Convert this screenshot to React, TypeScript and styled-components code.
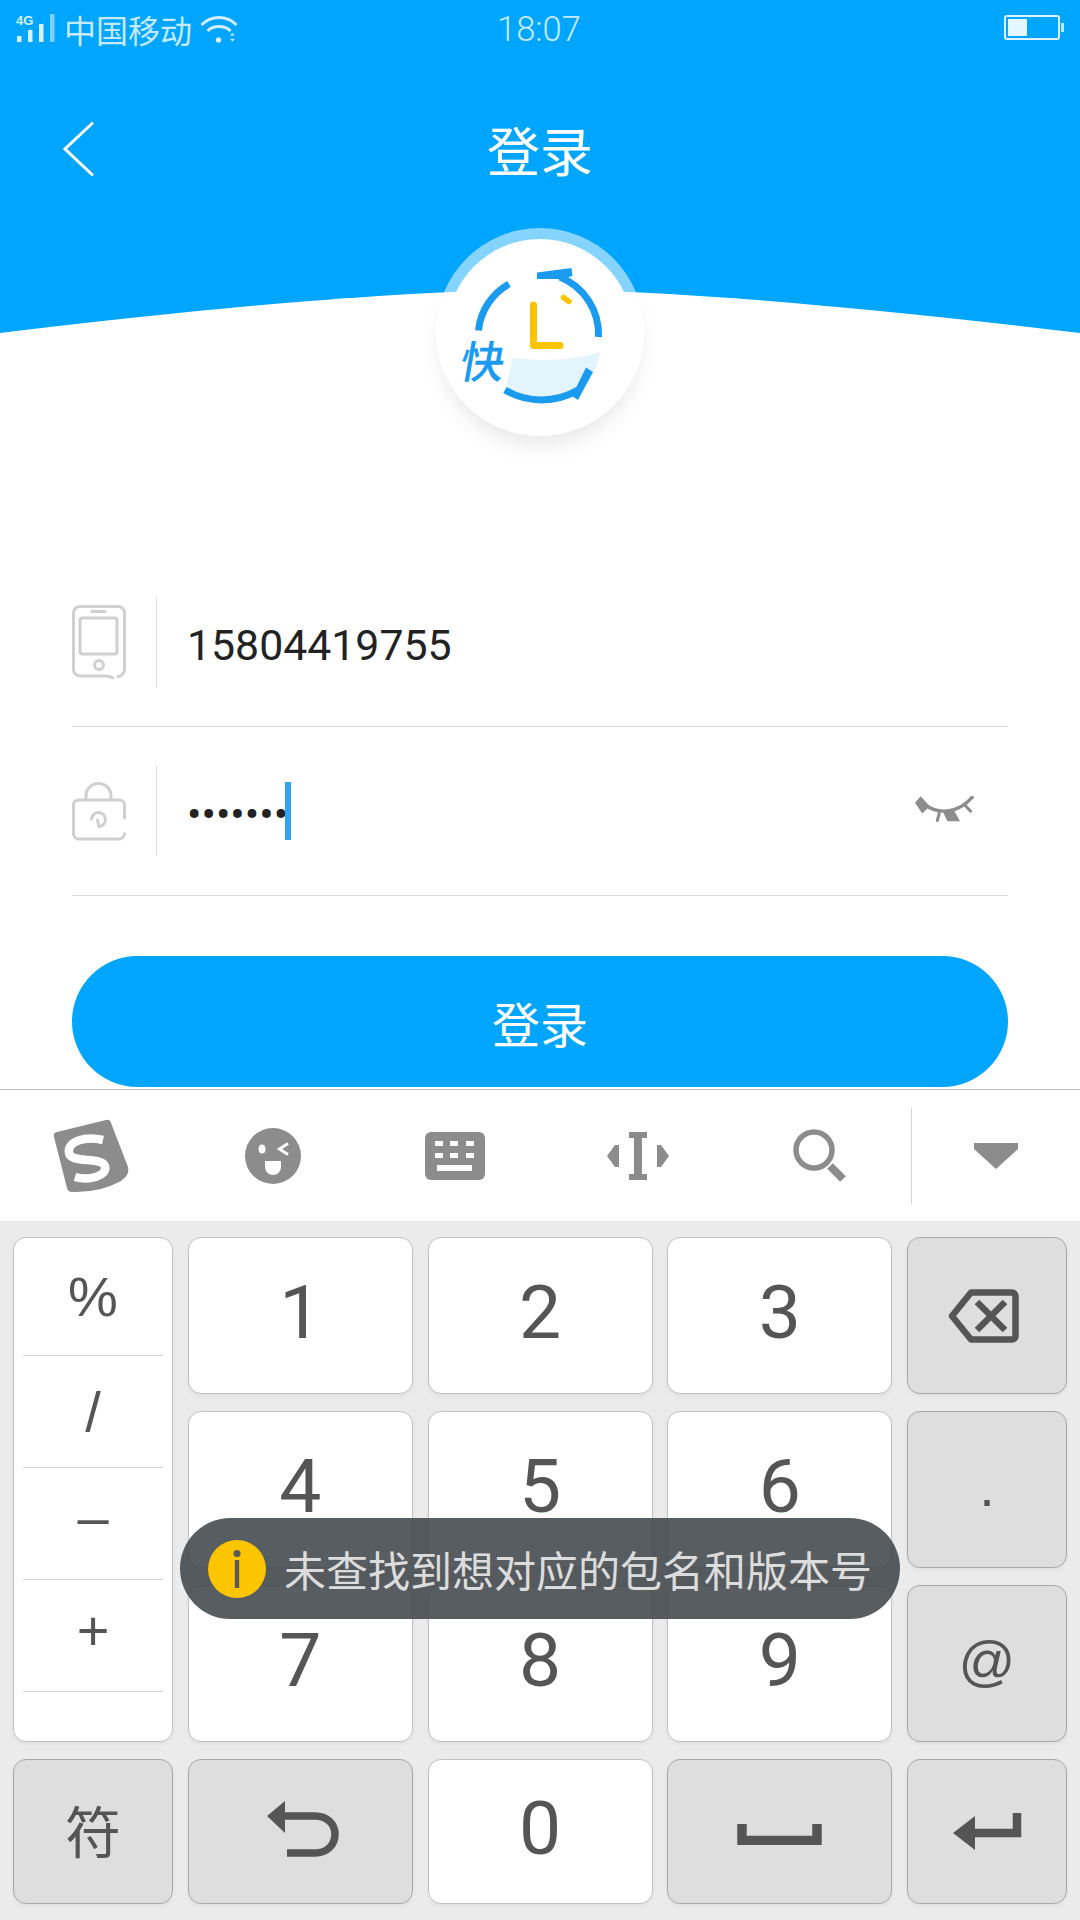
import React from "react";
import styled, { createGlobalStyle } from "styled-components";

const Global = createGlobalStyle`
  html, body { margin: 0; padding: 0; background: #fff; }
  * { box-sizing: border-box; }
`;

const BLUE = "#00a5fe";
const CJK = `"Noto Sans CJK SC", "Liberation Sans", sans-serif`;
const ICON = "#8c8c8c";
const KEYINK = "#555555";

const Page = styled.div`
  position: relative;
  width: 1080px;
  height: 1920px;
  display: flex;
  flex-direction: column;
  overflow: hidden;
  background: #fff;
`;

const Hero = styled.header`
  position: relative;
  height: 333px;
  flex: none;
  display: flex;
  flex-direction: column;
  background: ${BLUE};
  color: #fff;
`;

const StatusBar = styled.div`
  height: 58px;
  display: grid;
  grid-template-columns: 1fr auto 1fr;
  align-items: center;
  padding: 0 18px 0 16px;
`;

const StatusLeft = styled.div`
  display: flex;
  align-items: center;
`;

const Carrier = styled.span`
  font: 400 32px/1 ${CJK};
  color: #c4eaff;
  margin-left: 8px;
`;

const Clock = styled.span`
  font: 300 34.500px/1 Roboto, sans-serif;
  color: #c4eaff;
`;

const Battery = styled.div`
  position: relative;
  justify-self: end;
  width: 56px;
  height: 25px;
  margin: 0 2px 3px 0;
  border: 2px solid #dff3ff;
  border-radius: 3px;
  padding: 2px;
  &::after {
    content: "";
    position: absolute;
    right: -6px;
    top: 6px;
    width: 3px;
    height: 9px;
    background: #bfe8ff;
  }
`;

const BatteryLevel = styled.div`
  width: 19px;
  height: 100%;
  background: #e4f6ff;
`;

const NavBar = styled.nav`
  margin-top: 41px;
  height: 100px;
  display: grid;
  grid-template-columns: 1fr auto 1fr;
  align-items: center;
`;

const BackChevron = styled.svg`
  margin-left: 63px;
`;

const Title = styled.h1`
  margin: 0;
  font: 400 53px/1 ${CJK};
  color: #fff;
`;

const Wave = styled.svg`
  display: block;
  margin-top: auto;
  width: 1080px;
  height: 43px;
`;

const LogoDisc = styled.div`
  position: absolute;
  left: 436px;
  top: 228px;
  width: 208px;
  height: 208px;
  border-radius: 50%;
  background: rgba(255, 255, 255, 0.52);
  box-shadow: 0 14px 22px -6px rgba(0, 0, 0, 0.1);
`;

const LogoFace = styled.div`
  position: absolute;
  inset: 11px;
  border-radius: 50%;
  background: #fff;
`;

const LogoArt = styled.svg`
  position: absolute;
  inset: 0;
  width: 208px;
  height: 208px;
`;

const Form = styled.main`
  flex: 1;
  padding: 225px 72px 0;
  display: flex;
  flex-direction: column;
`;

const Field = styled.div`
  height: 169px;
  display: flex;
  align-items: center;
  border-bottom: 1px solid #dedede;
`;

const FieldIcon = styled.div`
  width: 84px;
  flex: none;
  display: flex;
  align-items: center;
`;

const FieldRule = styled.div`
  width: 1px;
  height: 90px;
  background: #dcdcdc;
  flex: none;
`;

const FieldValue = styled.div`
  flex: 1;
  padding: 7px 0 0 30px;
  display: flex;
  align-items: center;
  font: 400 42.800px/1 Roboto, sans-serif;
  color: #222;
`;

const Caret = styled.span`
  width: 6px;
  height: 58px;
  margin: -7px 0 0 -3px;
  background: #2fa4f0;
`;

const EyeButton = styled.div`
  display: flex;
  margin: 0 33px 3px 0;
`;

const SubmitButton = styled.button`
  margin-top: 60px;
  width: 936px;
  height: 131px;
  flex: none;
  border: 0;
  border-radius: 66px;
  background: ${BLUE};
  color: #fff;
  font: 400 48px/1 ${CJK};
`;

const Keyboard = styled.section`
  position: relative;
  flex: none;
  height: 831px;
  display: flex;
  flex-direction: column;
  background: #ebebeb;
`;

const Toolbar = styled.div`
  height: 132px;
  flex: none;
  display: grid;
  grid-template-columns: repeat(5, 182.200px) 1px 1fr;
  align-items: center;
  justify-items: center;
  background: #fff;
  border-top: 1px solid #bdbdbd;
`;

const ToolRule = styled.div`
  width: 1px;
  height: 96px;
  background: #d4d4d4;
`;

const Keys = styled.div`
  display: grid;
  grid-template-columns: 160px 225px 225px 225px 160px;
  grid-template-rows: 157px 157px 157px 145px;
  gap: 17px 14.750px;
  padding: 16px 0 0 13px;
`;

const Key = styled.div<{ $fn?: boolean; $level?: boolean }>`
  display: flex;
  align-items: center;
  justify-content: center;
  padding-bottom: ${(p) => (p.$level ? 0 : 6)}px;
  border-radius: 13px;
  border: 1px solid ${(p) => (p.$fn ? "#a9a9a9" : "#c2c2c2")};
  background: ${(p) => (p.$fn ? "#dedede" : "#fff")};
  box-shadow: 0 2px 4px rgba(0, 0, 0, 0.05);
  color: ${KEYINK};
  font: 400 75px/1 Roboto, sans-serif;
`;

const SymbolColumn = styled.div`
  grid-row: 1 / span 3;
  display: flex;
  flex-direction: column;
  padding: 0 9px;
  border-radius: 13px;
  border: 1px solid #c2c2c2;
  background: #fff;
  box-shadow: 0 2px 4px rgba(0, 0, 0, 0.05);
`;

const SymbolCell = styled.div<{ $h: number; $lift?: number }>`
  height: ${(p) => p.$h}px;
  flex: none;
  display: flex;
  align-items: center;
  justify-content: center;
  padding-bottom: ${(p) => p.$lift ?? 0}px;
  border-bottom: 1px solid #cfcfcf;
  color: ${KEYINK};
  font: 400 56px/1 "Liberation Sans", sans-serif;
`;

const SmallKeyText = styled.span`
  font: 400 56px/1 "Liberation Sans", sans-serif;
`;

const CjkKeyText = styled.span`
  font: 400 56px/1 ${CJK};
`;

const Toast = styled.div`
  position: absolute;
  left: 180px;
  top: 429px;
  width: 720px;
  height: 101px;
  display: flex;
  align-items: center;
  gap: 18px;
  padding-left: 28px;
  border-radius: 51px;
  background: rgba(60, 66, 72, 0.86);
  color: #dcdcdc;
  font: 400 42px/1 ${CJK};
  white-space: nowrap;
`;

const SignalSvg = styled.svg`
  overflow: visible;
`;

const BackspaceSvg = styled.svg`
  margin-left: -7px;
`;

const SpaceSvg = styled.svg`
  margin-top: 6px;
`;

const WifiSvg = styled.svg`
  margin-left: 8px;
`;

const UndoSvg = styled.svg`
  margin-left: 6px;
`;

const EnterSvg = styled.svg`
  margin-left: 3px;
`;

const SignalIcon = () => (
  <SignalSvg width="40" height="30" viewBox="0 0 40 30">
    <text x="0" y="11" fontFamily="'Liberation Sans', sans-serif" fontWeight="700" fontSize="13" fill="#d8f1ff">4G</text>
    <rect x="1" y="22" width="4.500" height="6" fill="#d8f1ff" />
    <rect x="12" y="16" width="4.500" height="12" fill="#d8f1ff" />
    <rect x="23" y="10" width="4.500" height="18" fill="#d8f1ff" />
    <rect x="34" y="0" width="4.500" height="28" fill="#7fceff" />
  </SignalSvg>
);

const WifiIcon = () => (
  <WifiSvg width="38" height="29" viewBox="0 0 38 29" fill="none" stroke="#d0eeff" strokeWidth="3">
    <path d="M1.500 10 C11 0 27 0 36.500 10" />
    <path d="M7.500 16 C13 10 25 10 30.500 16" />
    <circle cx="18.500" cy="25" r="2.700" fill="#d0eeff" stroke="none" />
    <path d="M30 20.500 h5 l-2.500 -2.500 z M30 24 h5 l-2.500 2.500 z" fill="#d0eeff" stroke="none" />
  </WifiSvg>
);

const PhoneIcon = () => (
  <svg width="54" height="75" viewBox="0 0 54 75" fill="none" stroke="#d0d0d0" strokeWidth="3" strokeLinecap="round">
    <path d="M41 73 C38 71 36 71 33 71 H8 A6.500 6.500 0 0 1 1.500 64.500 V8 A6.500 6.500 0 0 1 8 1.500 H46 A6.500 6.500 0 0 1 52.500 8 V64 C52.500 68 50 71 46 71.500" />
    <path d="M20 6.500 H33" />
    <rect x="8" y="13" width="37" height="36" rx="2.500" />
    <circle cx="27" cy="60" r="4.500" />
  </svg>
);

const LockIcon = () => (
  <svg width="54" height="59" viewBox="0 0 54 59" fill="none" stroke="#d0d0d0" strokeWidth="3" strokeLinecap="round">
    <path d="M14 17 V14 A12.500 12.500 0 0 1 39 14 V17" />
    <path d="M52.500 36 V23 A5 5 0 0 0 47.500 18 H6.500 A5 5 0 0 0 1.500 23 V52 A5 5 0 0 0 6.500 57 H47 A5.500 5.500 0 0 0 52.500 51.500" />
    <path d="M19.500 37 A7 7 0 1 1 27 44.500 L25.500 38" />
  </svg>
);

const EyeIcon = () => (
  <svg width="60" height="27" viewBox="108 85 180 80" fill="none" stroke={ICON}>
    <path d="M135 108 C175 140 235 140 280 88" strokeWidth="10" strokeLinecap="round" />
    <path d="M258 112 L275 130 M181 135 L175 158" strokeWidth="9" strokeLinecap="round" />
    <path d="M108 105 L125 85 L152 115 L130 137 Z M190 127 L225 127 L243 160 L205 160 Z" fill={ICON} stroke="none" />
  </svg>
);

const SogouIcon = () => (
  <svg width="76" height="74" viewBox="0 0 76 74" fill="none">
    <path d="M4 13 L53 1 Q57 0 58 4 L75 48 Q77 56 68 62 Q46 74 19 73 Q15 73 14 69 L1 18 Q0 14 4 13 Z" fill={ICON} />
    <path d="M50 21 C32 17 14 22 16 34 C18 45 48 37 52 47 C55 57 36 62 22 58" stroke="#fff" strokeWidth="8.500" />
  </svg>
);

const EmojiIcon = () => (
  <svg width="56" height="56" viewBox="0 0 56 56" fill="none">
    <circle cx="28" cy="28" r="28" fill={ICON} />
    <ellipse cx="17" cy="21" rx="3.500" ry="4.500" fill="#fff" />
    <path d="M43 15.500 L34.500 21 L43 26.500" stroke="#fff" strokeWidth="3" />
    <path d="M20 33 H36 V39 A8 8 0 0 1 20 39 Z" fill="#fff" />
  </svg>
);

const KeyboardIcon = () => (
  <svg width="60" height="48" viewBox="0 0 60 48">
    <rect width="60" height="48" rx="6" fill={ICON} />
    {[10, 25, 41].map((x) => (
      <React.Fragment key={x}>
        <rect x={x} y="9" width="8" height="5" fill="#fff" />
        <rect x={x} y="21" width="8" height="5" fill="#fff" />
      </React.Fragment>
    ))}
    <rect x="12" y="33" width="35" height="6" fill="#fff" />
  </svg>
);

const CursorIcon = () => (
  <svg width="62" height="48" viewBox="0 0 62 48" fill={ICON}>
    <path d="M22 0 H40 V6 H35 V42 H40 V48 H22 V42 H27 V6 H22 Z" />
    <path d="M0 24 L8 13 H12 V35 H8 Z M62 24 L54 13 H50 V35 H54 Z" />
  </svg>
);

const SearchIcon = () => (
  <svg width="54" height="54" viewBox="0 0 54 54" fill="none" stroke={ICON}>
    <circle cx="21" cy="21" r="18" strokeWidth="5.500" />
    <path d="M37 37 L50 50" strokeWidth="8" />
  </svg>
);

const CollapseIcon = () => (
  <svg width="44" height="26" viewBox="0 0 44 26">
    <path d="M0 0 H44 V6 L22 26 L0 6 Z" fill={ICON} />
  </svg>
);

const BackspaceIcon = () => (
  <BackspaceSvg width="71" height="54" viewBox="0 0 71 54" fill="none" stroke={KEYINK} strokeWidth="6.500">
    <path d="M23 3.500 H64 A3.500 3.500 0 0 1 67.500 7 V47 A3.500 3.500 0 0 1 64 50.500 H23 L4 27 Z" strokeLinejoin="round" />
    <path d="M29 13 L57 41 M57 13 L29 41" />
  </BackspaceSvg>
);

const UndoIcon = () => (
  <UndoSvg width="72" height="56" viewBox="0 0 72 56" fill="none">
    <path d="M0 15 L18 0 V32 Z" fill={KEYINK} />
    <path d="M15 15 H48 C60 15 68 23 68 33 C68 44 60 52 48 52 H20" stroke={KEYINK} strokeWidth="7.500" />
  </UndoSvg>
);

const SpaceIcon = () => (
  <SpaceSvg width="85" height="21" viewBox="0 0 85 21" fill="none">
    <path d="M5 0 V16.500 H80 V0" stroke={KEYINK} strokeWidth="9.500" />
  </SpaceSvg>
);

const EnterIcon = () => (
  <EnterSvg width="72" height="37" viewBox="0 0 72 37" fill="none">
    <path d="M0 20 L22 3 V37 Z" fill={KEYINK} />
    <path d="M20 20 H64 V0" stroke={KEYINK} strokeWidth="8.500" />
  </EnterSvg>
);

const InfoIcon = () => (
  <svg width="58" height="58" viewBox="0 0 58 58">
    <circle cx="29" cy="29" r="29" fill="#fdc400" />
    <circle cx="29" cy="13.500" r="3.500" fill="#58595b" />
    <rect x="26.800" y="20" width="4.400" height="28" fill="#58595b" />
  </svg>
);

export default function App() {
  return (
    <Page>
      <Global />
      <Hero>
        <StatusBar>
          <StatusLeft>
            <SignalIcon />
            <Carrier>中国移动</Carrier>
            <WifiIcon />
          </StatusLeft>
          <Clock>18:07</Clock>
          <Battery>
            <BatteryLevel />
          </Battery>
        </StatusBar>
        <NavBar>
          <BackChevron width="31" height="54" viewBox="0 0 31 54" fill="none" stroke="#fff" strokeWidth="3" strokeLinecap="round">
            <path d="M29 1.500 L2 27 L29 52.500" />
          </BackChevron>
          <Title>登录</Title>
        </NavBar>
        <Wave viewBox="0 0 1080 43" preserveAspectRatio="none">
          <path d="M0 43 C240 14 420 0 540 0 C660 0 840 14 1080 43 Z" fill="#fff" />
        </Wave>
        <LogoDisc>
          <LogoFace />
          <LogoArt viewBox="36 18 208 208" fill="none">
            <path d="M113 148 Q160 154 200 142 Q198 166 176 180 A78 78 0 0 1 105 180 Z" fill="#e3f4fd" />
            <path d="M109 74 A60 60 0 0 0 78.500 120.500" stroke="#1a9bef" strokeWidth="7" />
            <path d="M160 67 A62 62 0 0 1 198.500 127" stroke="#1a9bef" strokeWidth="7" />
            <path d="M137 62.500 L171.500 58 L172.500 66 L161 69 L137 69 Z" fill="#1a9bef" />
            <path d="M105 180 A72 72 0 0 0 178 180" stroke="#1a9bef" strokeWidth="7" />
            <path d="M186 157.500 L193 162 L178 190 L172 186 Z" fill="#1a9bef" />
            <path d="M133.500 95 V135.500 H160" stroke="#fdc400" strokeWidth="7" strokeLinecap="round" strokeLinejoin="round" />
            <path d="M163.500 87.500 L169 91.500" stroke="#fdc400" strokeWidth="5.500" strokeLinecap="round" />
            <text x="0" y="0" transform="translate(58 168) skewX(-10)" fontFamily={CJK} fontWeight="500" fontSize="44" fill="#1a9bef">快</text>
          </LogoArt>
        </LogoDisc>
      </Hero>

      <Form>
        <Field>
          <FieldIcon><PhoneIcon /></FieldIcon>
          <FieldRule />
          <FieldValue>15804419755</FieldValue>
        </Field>
        <Field>
          <FieldIcon><LockIcon /></FieldIcon>
          <FieldRule />
          <FieldValue>
            •••••••
            <Caret />
          </FieldValue>
          <EyeButton><EyeIcon /></EyeButton>
        </Field>
        <SubmitButton>登录</SubmitButton>
      </Form>

      <Keyboard>
        <Toolbar>
          <SogouIcon />
          <EmojiIcon />
          <KeyboardIcon />
          <CursorIcon />
          <SearchIcon />
          <ToolRule />
          <CollapseIcon />
        </Toolbar>
        <Keys>
          <SymbolColumn>
            <SymbolCell $h={118}>%</SymbolCell>
            <SymbolCell $h={112}>/</SymbolCell>
            <SymbolCell $h={112} $lift={14}>–</SymbolCell>
            <SymbolCell $h={112} $lift={10}>+</SymbolCell>
          </SymbolColumn>
          <Key>1</Key>
          <Key>2</Key>
          <Key>3</Key>
          <Key $fn $level><BackspaceIcon /></Key>
          <Key>4</Key>
          <Key>5</Key>
          <Key>6</Key>
          <Key $fn><SmallKeyText>.</SmallKeyText></Key>
          <Key>7</Key>
          <Key>8</Key>
          <Key>9</Key>
          <Key $fn><SmallKeyText>@</SmallKeyText></Key>
          <Key $fn><CjkKeyText>符</CjkKeyText></Key>
          <Key $fn><UndoIcon /></Key>
          <Key>0</Key>
          <Key $fn $level><SpaceIcon /></Key>
          <Key $fn $level><EnterIcon /></Key>
        </Keys>
        <Toast>
          <InfoIcon />
          未查找到想对应的包名和版本号
        </Toast>
      </Keyboard>
    </Page>
  );
}
